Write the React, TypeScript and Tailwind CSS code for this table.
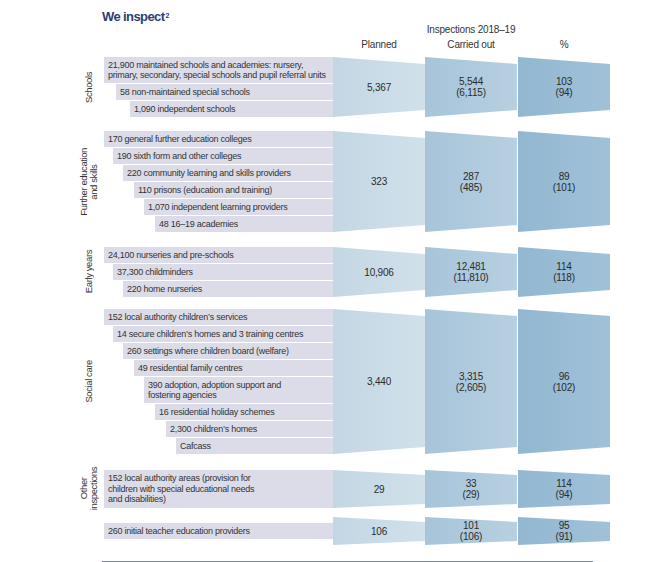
import type { ReactNode } from "react";

type Row = { text: ReactNode; indent: string; h: string };
type Group = {
  label?: ReactNode;
  rows: Row[];
  planned: string;
  carried: [string, string];
  pct: [string, string];
  mt: string;
  minH?: string;
  clip: string;
};

const ONE = "h-[16px]";
const TWO = "h-[26px]";
const BIG = "[clip-path:polygon(0_0,100%_7px,100%_calc(100%_-_7px),0_100%)]";
const SMALL = "[clip-path:polygon(0_0,100%_5px,100%_calc(100%_-_4px),0_100%)]";

const groups: Group[] = [
  {
    label: "Schools",
    mt: "mt-[6px]",
    clip: BIG,
    rows: [
      {
        text: (
          <>
            21,900 maintained schools and academies: nursery,
            <br />
            primary, secondary, special schools and pupil referral units
          </>
        ),
        indent: "ml-0",
        h: TWO,
      },
      { text: "58 non-maintained special schools", indent: "ml-[12px]", h: ONE },
      { text: "1,090 independent schools", indent: "ml-[26px]", h: ONE },
    ],
    planned: "5,367",
    carried: ["5,544", "(6,115)"],
    pct: ["103", "(94)"],
  },
  {
    label: (
      <>
        Further education
        <br />
        and skills
      </>
    ),
    mt: "mt-[14px]",
    clip: BIG,
    rows: [
      { text: "170 general further education colleges", indent: "ml-0", h: ONE },
      { text: "190 sixth form and other colleges", indent: "ml-[9px]", h: ONE },
      { text: "220 community learning and skills providers", indent: "ml-[19px]", h: ONE },
      { text: "110 prisons (education and training)", indent: "ml-[30px]", h: ONE },
      { text: "1,070 independent learning providers", indent: "ml-[40px]", h: ONE },
      { text: "48 16–19 academies", indent: "ml-[51px]", h: ONE },
    ],
    planned: "323",
    carried: ["287", "(485)"],
    pct: ["89", "(101)"],
  },
  {
    label: "Early years",
    mt: "mt-[15px]",
    clip: BIG,
    rows: [
      { text: "24,100 nurseries and pre-schools", indent: "ml-0", h: ONE },
      { text: "37,300 childminders", indent: "ml-[9px]", h: ONE },
      { text: "220 home nurseries", indent: "ml-[19px]", h: ONE },
    ],
    planned: "10,906",
    carried: ["12,481", "(11,810)"],
    pct: ["114", "(118)"],
  },
  {
    label: "Social care",
    mt: "mt-[12px]",
    clip: BIG,
    rows: [
      { text: "152 local authority children’s services", indent: "ml-0", h: ONE },
      { text: "14 secure children’s homes and 3 training centres", indent: "ml-[9px]", h: ONE },
      { text: "260 settings where children board (welfare)", indent: "ml-[19px]", h: ONE },
      { text: "49 residential family centres", indent: "ml-[30px]", h: ONE },
      {
        text: (
          <>
            390 adoption, adoption support and
            <br />
            fostering agencies
          </>
        ),
        indent: "ml-[40px]",
        h: TWO,
      },
      { text: "16 residential holiday schemes", indent: "ml-[51px]", h: ONE },
      { text: "2,300 children’s homes", indent: "ml-[62px]", h: ONE },
      { text: "Cafcass", indent: "ml-[72px]", h: ONE },
    ],
    planned: "3,440",
    carried: ["3,315", "(2,605)"],
    pct: ["96", "(102)"],
  },
  {
    label: (
      <>
        Other
        <br />
        inspections
      </>
    ),
    mt: "mt-[16px]",
    clip: SMALL,
    rows: [
      {
        text: (
          <>
            152 local authority areas (provision for
            <br />
            children with special educational needs
            <br />
            and disabilities)
          </>
        ),
        indent: "ml-0",
        h: "h-[38px]",
      },
    ],
    planned: "29",
    carried: ["33", "(29)"],
    pct: ["114", "(94)"],
  },
  {
    mt: "mt-[9px]",
    minH: "h-[28px]",
    clip: SMALL,
    rows: [{ text: "260 initial teacher education providers", indent: "ml-0", h: ONE }],
    planned: "106",
    carried: ["101", "(106)"],
    pct: ["95", "(91)"],
  },
];

function Trap({ cls, clip, children }: { cls: string; clip: string; children: ReactNode }) {
  return (
    <div
      className={`flex w-[92px] flex-col items-center justify-center text-center text-[10px] leading-[11px] tracking-[-0.2px] text-[#2b2b2b] ${cls} ${clip}`}
    >
      {children}
    </div>
  );
}

function GroupRow({ g }: { g: Group }) {
  return (
    <div className={`flex ${g.mt} ${g.minH ?? ""}`}>
      <div className="flex w-[26px] items-center justify-center pr-[4px]">
        {g.label && (
          <div className="flex h-0 items-center">
            <div className="rotate-180 whitespace-nowrap text-center text-[9.5px] leading-[10px] tracking-[-0.4px] text-[#333] [writing-mode:vertical-rl]">
              {g.label}
            </div>
          </div>
        )}
      </div>
      <div className="flex w-[229px] flex-col justify-center gap-px">
        {g.rows.map((r, i) => (
          <div
            key={i}
            className={`${r.indent} ${r.h} flex items-center whitespace-nowrap bg-[#dcdce9] pl-[4px] text-[9px] leading-[10.5px] tracking-[-0.25px] text-[#333]`}
          >
            <div>{r.text}</div>
          </div>
        ))}
      </div>
      <Trap cls="bg-linear-to-r from-[#c3d6e3] to-[#d0e1eb]" clip={g.clip}>
        {g.planned}
      </Trap>
      <Trap cls="bg-linear-to-r from-[#a7c4d9] to-[#b7d0e1]" clip={g.clip}>
        <span>{g.carried[0]}</span>
        <span>{g.carried[1]}</span>
      </Trap>
      <Trap cls="ml-px bg-linear-to-r from-[#93b7d1] to-[#a0c1d8]" clip={g.clip}>
        <span>{g.pct[0]}</span>
        <span>{g.pct[1]}</span>
      </Trap>
    </div>
  );
}

export default function App() {
  return (
    <div className="h-[562px] w-[670px] overflow-hidden bg-white pl-[78px] pt-[10px] font-['Liberation_Sans',Arial,sans-serif]">
      <h1 className="ml-[24px] h-[14px] text-[13px] leading-[14px] font-bold tracking-[-0.6px] text-[#2b3d74]">
        We inspect<sup className="ml-px text-[7px]">2</sup>
      </h1>

      <div className="flex whitespace-nowrap text-[10px] leading-[12px] tracking-[-0.2px] text-[#333]">
        <div className="w-[255px]" />
        <div className="flex flex-col">
          <div className="ml-[92px] w-[92px] text-center">Inspections 2018–19</div>
          <div className="mt-[3px] flex">
            <div className="w-[92px] text-center">Planned</div>
            <div className="w-[92px] text-center">Carried out</div>
            <div className="ml-px w-[92px] text-center">%</div>
          </div>
        </div>
      </div>

      {groups.map((g, i) => (
        <GroupRow key={i} g={g} />
      ))}

      <div className="ml-[24px] mt-[16px] h-px w-[491px] bg-[#7d8ba6]" />
    </div>
  );
}
